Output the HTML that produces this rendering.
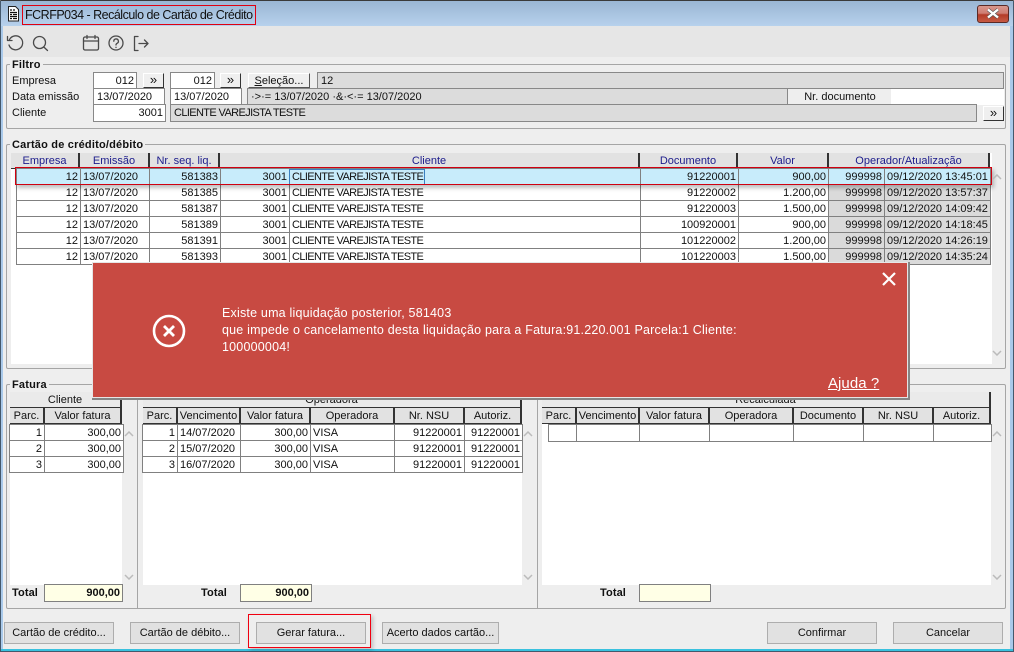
<!DOCTYPE html>
<html lang="pt"><head><meta charset="utf-8"><title>FCRFP034</title>
<style>
html,body{margin:0;padding:0;width:1014px;height:652px;overflow:hidden;background:#fff}
body{position:relative;font-family:"Liberation Sans",Arial,sans-serif;font-size:11px;letter-spacing:0;color:#111}
div,svg,span.a,table{position:absolute}
.t{white-space:nowrap;line-height:14px}
.b{font-weight:bold;letter-spacing:.1px}
.f{box-sizing:border-box;line-height:14px;white-space:nowrap;padding:0 2px 0 3px;overflow:hidden}
.w{background:#fff;border:1px solid #888}
.g{background:#dcdcdc;border:1px solid #888}
.r{text-align:right}
.btn{box-sizing:border-box;background:#e1e1e1;border:1px solid #adadad;text-align:center;line-height:21px;white-space:nowrap}
.sm{background:#efefef;border-top:1px solid #fff;border-left:1px solid #fff;border-right:1px solid #333;border-bottom:1px solid #333;box-sizing:border-box;text-align:center;line-height:11px;font-size:13px}
.grp{box-sizing:border-box;border:1px solid #a5a5a5;border-radius:2px}
.lab{background:#eee;padding:0 2px;font-weight:bold;line-height:14px;white-space:nowrap;letter-spacing:.2px}
table{border-collapse:collapse;table-layout:fixed;background:#fff}
td{border:1px solid #808080;padding:1px 2px 0;height:15px;line-height:14px;white-space:nowrap;overflow:hidden;text-align:right;box-sizing:border-box}
td.l{text-align:left}
td.gy{background:#dadada}
.c{font-size:11px;letter-spacing:-.62px}
tr.sel td{background:#c8ecfb}
.h{box-sizing:border-box;background:#e2e2e2;border-right:2px solid #333;border-bottom:1px solid #333;text-align:center;line-height:17px;white-space:nowrap;overflow:hidden}
.n{color:#1c1c8c}
.ch{width:10px;height:6px}
</style></head><body>
<!-- window frame -->
<div style="left:0;top:0;width:1014px;height:652px;background:#a9c9ea;border-radius:6px 6px 0 0"></div>
<div style="left:0;top:0;width:1014px;height:1px;background:#3a3a3a;border-radius:6px 6px 0 0"></div>
<div style="left:1px;top:1px;width:1012px;height:25px;background:linear-gradient(#9ab6d4,#b7d1ec)"></div>
<div style="left:0;top:1px;width:1px;height:651px;background:#44586c"></div>
<div style="left:1013px;top:1px;width:1px;height:651px;background:#44586c"></div>
<div style="left:3px;top:26px;width:1007px;height:623px;background:#eee"></div>
<div style="left:3px;top:26px;width:1007px;height:31px;background:#e6e6e6"></div>
<div style="left:1px;top:649px;width:1012px;height:2px;background:#39c1de"></div>
<div style="left:0;top:651px;width:1014px;height:1px;background:#44586c"></div>

<!-- title icon -->
<svg style="left:7px;top:6px" width="13" height="16" viewBox="0 0 13 16"><path d="M1.500.5h7l3 3v11.500h-10z" fill="#fff" stroke="#222"/><path d="M3 4h2M6 4h2M3 6.500h7M3 8.500h2M6 8.500h4M3 10.500h7M3 12.500h2M6 12.500h4" stroke="#111" stroke-width="1.200"/></svg>
<div class="t" style="left:25px;top:8px;font-size:12.500px;letter-spacing:-.5px;color:#111">FCRFP034 - Recálculo de Cartão de Crédito</div>
<div style="left:22px;top:5px;width:232px;height:18px;border:1px solid #e00010"></div>
<!-- close -->
<div style="left:977px;top:5px;width:30px;height:16px;border:1px solid #5a2a26;border-radius:3px;background:linear-gradient(#d8978d 0,#cf7d72 45%,#b43c28 55%,#c75a44 100%)"></div>
<svg style="left:985px;top:8px" width="16" height="11" viewBox="0 0 16 11"><path d="M3 1.500l10 8M13 1.500l-10 8" stroke="#555" stroke-width="3.600"/><path d="M3 1.500l10 8M13 1.500l-10 8" stroke="#fff" stroke-width="2.400"/></svg>

<!-- toolbar icons -->
<svg style="left:6px;top:34px" width="150" height="20" viewBox="0 0 150 20" fill="none" stroke="#4a4a4a" stroke-width="1.300" stroke-linecap="round" stroke-linejoin="round">
<path d="M3.500 5.500A7 7 0 1 1 3 11"/><path d="M1.500 2.500v4h4.500" />
<circle cx="33.500" cy="8.500" r="6"/><path d="M37.800 13l3.700 3.500"/>
<rect x="77.500" y="3" width="15" height="13" rx="1.500"/><path d="M77.500 7h15M81 1.500v3M89 1.500v3"/>
<circle cx="110" cy="9" r="7"/><path d="M107.800 7.200a2.300 2.300 0 1 1 3.300 2.100c-.8.400-1.100.9-1.100 1.700"/><path d="M110 13.300v.2"/>
<path d="M132 2.500h-3.500v14h3.500M133 9.500h8.500M138.500 6l3.500 3.500-3.500 3.500"/>
</svg>

<!-- Filtro -->
<div class="grp" style="left:6px;top:64px;width:1000px;height:65px"></div>
<div class="lab" style="left:10px;top:58px">Filtro</div>
<div class="t" style="left:12px;top:74px">Empresa</div>
<div class="t" style="left:12px;top:90px">Data emissão</div>
<div class="t" style="left:12px;top:106px">Cliente</div>
<div class="f w r" style="left:93px;top:72px;width:44px;height:17px;line-height:17px">012</div>
<div class="sm" style="left:143px;top:73px;width:21px;height:15px">»</div>
<div class="f w r" style="left:170px;top:72px;width:45px;height:17px;line-height:17px">012</div>
<div class="sm" style="left:220px;top:73px;width:21px;height:15px">»</div>
<div class="sm" style="left:248px;top:73px;width:62px;height:15px;font-size:11px;line-height:14px;border-color:#fff #555 #555 #fff"><u>S</u>eleção...</div>
<div class="f g" style="left:317px;top:72px;width:687px;height:17px;line-height:17px">12</div>
<div class="f w" style="left:93px;top:88px;width:72px;height:17px;line-height:17px">13/07/2020</div>
<div class="f w" style="left:170px;top:88px;width:72px;height:17px;line-height:17px">13/07/2020</div>
<div class="f g" style="left:247px;top:88px;width:541px;height:17px;line-height:17px">·&gt;·= 13/07/2020 ·&amp;·&lt;·= 13/07/2020</div>
<div class="f" style="left:787px;top:88px;width:105px;height:17px;line-height:17px;text-align:center;background:#eee;border:1px solid #888;border-bottom:0">Nr. documento</div>
<div style="left:891px;top:88px;width:113px;height:16px;background:#fff;border-top:1px solid #888"></div>
<div class="f w r" style="left:93px;top:104px;width:73px;height:18px;line-height:17px">3001</div>
<div class="f g" style="left:170px;top:104px;width:807px;height:18px;line-height:17px"><span class="c">CLIENTE VAREJISTA TESTE</span></div>
<div class="sm" style="left:983px;top:106px;width:21px;height:15px">»</div>

<!-- Cartao group -->
<div class="grp" style="left:6px;top:144px;width:1000px;height:225px"></div>
<div class="lab" style="left:10px;top:138px">Cartão de crédito/débito</div>
<div style="left:11px;top:153px;width:981px;height:211px;background:#fff"></div>
<div style="left:11px;top:153px;width:979px;height:15px;background:#e2e2e2"></div>
<div class="h n" style="left:11px;top:153px;width:69px;height:16px">Empresa</div>
<div class="h n" style="left:80px;top:153px;width:70px;height:16px">Emissão</div>
<div class="h n" style="left:150px;top:153px;width:70px;height:16px">Nr. seq. liq.</div>
<div class="h n" style="left:220px;top:153px;width:420px;height:16px">Cliente</div>
<div class="h n" style="left:640px;top:153px;width:98px;height:16px">Documento</div>
<div class="h n" style="left:738px;top:153px;width:91px;height:16px">Valor</div>
<div class="h n" style="left:829px;top:153px;width:161px;height:16px">Operador/Atualização</div>
<div style="left:16px;top:168px;width:975px;height:98px;overflow:hidden">
<table style="left:0;top:0;width:974px">
<colgroup><col style="width:64px"><col style="width:69px"><col style="width:71px"><col style="width:69px"><col style="width:351px"><col style="width:98px"><col style="width:90px"><col style="width:56px"><col style="width:106px"></colgroup>
<tr class="sel" style="height:16px"><td>12</td><td class="l">13/07/2020</td><td>581383</td><td>3001</td><td class="l"><span class="c">CLIENTE VAREJISTA TESTE</span></td><td>91220001</td><td>900,00</td><td>999998</td><td class="l">09/12/2020 13:45:01</td></tr>
<tr style="height:16px"><td>12</td><td class="l">13/07/2020</td><td>581385</td><td>3001</td><td class="l"><span class="c">CLIENTE VAREJISTA TESTE</span></td><td>91220002</td><td>1.200,00</td><td class="gy">999998</td><td class="l gy">09/12/2020 13:57:37</td></tr>
<tr style="height:16px"><td>12</td><td class="l">13/07/2020</td><td>581387</td><td>3001</td><td class="l"><span class="c">CLIENTE VAREJISTA TESTE</span></td><td>91220003</td><td>1.500,00</td><td class="gy">999998</td><td class="l gy">09/12/2020 14:09:42</td></tr>
<tr style="height:16px"><td>12</td><td class="l">13/07/2020</td><td>581389</td><td>3001</td><td class="l"><span class="c">CLIENTE VAREJISTA TESTE</span></td><td>100920001</td><td>900,00</td><td class="gy">999998</td><td class="l gy">09/12/2020 14:18:45</td></tr>
<tr style="height:16px"><td>12</td><td class="l">13/07/2020</td><td>581391</td><td>3001</td><td class="l"><span class="c">CLIENTE VAREJISTA TESTE</span></td><td>101220002</td><td>1.200,00</td><td class="gy">999998</td><td class="l gy">09/12/2020 14:26:19</td></tr>
<tr style="height:16px"><td>12</td><td class="l">13/07/2020</td><td>581393</td><td>3001</td><td class="l"><span class="c">CLIENTE VAREJISTA TESTE</span></td><td>101220003</td><td>1.500,00</td><td class="gy">999998</td><td class="l gy">09/12/2020 14:35:24</td></tr>
</table></div>
<div style="left:289px;top:169px;width:134px;height:14px;border:1px solid #3c80c0"></div>
<div style="left:15px;top:167px;width:975px;height:16px;border:1px solid #d00010;box-shadow:2px 3px 4px rgba(0,0,0,.25)"></div>
<svg class="ch" style="left:992px;top:174px" viewBox="0 0 10 6"><path d="M1 5l4-4 4 4" fill="none" stroke="#bbb" stroke-width="1.500"/></svg>
<svg class="ch" style="left:992px;top:350px" viewBox="0 0 10 6"><path d="M1 1l4 4 4-4" fill="none" stroke="#bbb" stroke-width="1.500"/></svg>

<!-- Fatura group -->
<div class="grp" style="left:6px;top:384px;width:1000px;height:225px"></div>
<div style="left:137px;top:385px;width:1px;height:223px;background:#a5a5a5"></div>
<div style="left:537px;top:385px;width:1px;height:223px;background:#a5a5a5"></div>
<div class="lab" style="left:10px;top:378px">Fatura</div>

<div style="left:10px;top:408px;width:112px;height:177px;background:#fff"></div>
<div class="h" style="left:10px;top:392px;width:112px;height:16px;background:#eaeaea">Cliente</div>
<div class="h" style="left:10px;top:408px;width:35px;height:16px">Parc.</div>
<div class="h" style="left:45px;top:408px;width:77px;height:16px">Valor fatura</div>
<table style="left:9px;top:424px;width:114px">
<colgroup><col style="width:35px"><col style="width:79px"></colgroup>
<tr style="height:16px"><td>1</td><td>300,00</td></tr><tr style="height:16px"><td>2</td><td>300,00</td></tr><tr style="height:16px"><td>3</td><td>300,00</td></tr></table>
<svg class="ch" style="left:124px;top:431px" viewBox="0 0 10 6"><path d="M1 5l4-4 4 4" fill="none" stroke="#bbb" stroke-width="1.500"/></svg>
<svg class="ch" style="left:124px;top:574px" viewBox="0 0 10 6"><path d="M1 1l4 4 4-4" fill="none" stroke="#bbb" stroke-width="1.500"/></svg>

<div style="left:143px;top:408px;width:379px;height:177px;background:#fff"></div>
<div class="h" style="left:143px;top:392px;width:379px;height:16px;background:#eaeaea">Operadora</div>
<div class="h" style="left:143px;top:408px;width:35px;height:16px">Parc.</div>
<div class="h" style="left:178px;top:408px;width:63px;height:16px">Vencimento</div>
<div class="h" style="left:241px;top:408px;width:70px;height:16px">Valor fatura</div>
<div class="h" style="left:311px;top:408px;width:84px;height:16px">Operadora</div>
<div class="h" style="left:395px;top:408px;width:70px;height:16px">Nr. NSU</div>
<div class="h" style="left:465px;top:408px;width:57px;height:16px">Autoriz.</div>
<table style="left:142px;top:424px;width:380px">
<colgroup><col style="width:35px"><col style="width:63px"><col style="width:70px"><col style="width:84px"><col style="width:70px"><col style="width:58px"></colgroup>
<tr style="height:16px"><td>1</td><td class="l">14/07/2020</td><td>300,00</td><td class="l">VISA</td><td>91220001</td><td>91220001</td></tr>
<tr style="height:16px"><td>2</td><td class="l">15/07/2020</td><td>300,00</td><td class="l">VISA</td><td>91220001</td><td>91220001</td></tr>
<tr style="height:16px"><td>3</td><td class="l">16/07/2020</td><td>300,00</td><td class="l">VISA</td><td>91220001</td><td>91220001</td></tr></table>
<svg class="ch" style="left:523px;top:431px" viewBox="0 0 10 6"><path d="M1 5l4-4 4 4" fill="none" stroke="#bbb" stroke-width="1.500"/></svg>
<svg class="ch" style="left:523px;top:574px" viewBox="0 0 10 6"><path d="M1 1l4 4 4-4" fill="none" stroke="#bbb" stroke-width="1.500"/></svg>

<div style="left:542px;top:408px;width:449px;height:177px;background:#fff"></div>
<div class="h" style="left:542px;top:392px;width:449px;height:16px;background:#eaeaea">Recalculada</div>
<div class="h" style="left:542px;top:408px;width:35px;height:16px">Parc.</div>
<div class="h" style="left:577px;top:408px;width:63px;height:16px">Vencimento</div>
<div class="h" style="left:640px;top:408px;width:70px;height:16px">Valor fatura</div>
<div class="h" style="left:710px;top:408px;width:84px;height:16px">Operadora</div>
<div class="h" style="left:794px;top:408px;width:70px;height:16px">Documento</div>
<div class="h" style="left:864px;top:408px;width:70px;height:16px">Nr. NSU</div>
<div class="h" style="left:934px;top:408px;width:57px;height:16px">Autoriz.</div>
<table style="left:548px;top:424px;width:443px">
<colgroup><col style="width:28px"><col style="width:63px"><col style="width:70px"><col style="width:84px"><col style="width:70px"><col style="width:70px"><col style="width:58px"></colgroup>
<tr style="height:17px"><td></td><td></td><td></td><td></td><td></td><td></td><td></td></tr></table>
<svg class="ch" style="left:992px;top:431px" viewBox="0 0 10 6"><path d="M1 5l4-4 4 4" fill="none" stroke="#bbb" stroke-width="1.500"/></svg>
<svg class="ch" style="left:992px;top:574px" viewBox="0 0 10 6"><path d="M1 1l4 4 4-4" fill="none" stroke="#bbb" stroke-width="1.500"/></svg>

<div class="t b" style="left:12px;top:586px">Total</div>
<div class="f r" style="left:44px;top:584px;width:79px;height:18px;line-height:17px;background:#ffffe6;border:1px solid #808080;font-weight:bold">900,00</div>
<div class="t b" style="left:201px;top:586px">Total</div>
<div class="f r" style="left:240px;top:584px;width:72px;height:18px;line-height:17px;background:#ffffe6;border:1px solid #808080;font-weight:bold">900,00</div>
<div class="t b" style="left:600px;top:586px">Total</div>
<div class="f" style="left:639px;top:584px;width:72px;height:18px;background:#ffffe6;border:1px solid #808080"></div>

<!-- buttons -->
<div class="btn" style="left:4px;top:622px;width:110px;height:22px">Cartão de crédito...</div>
<div class="btn" style="left:130px;top:622px;width:110px;height:22px">Cartão de débito...</div>
<div style="left:248px;top:614px;width:121px;height:32px;border:1px solid #f00010;box-shadow:2px 2px 4px rgba(0,0,0,.2)"></div>
<div class="btn" style="left:256px;top:622px;width:110px;height:22px">Gerar fatura...</div>
<div class="btn" style="left:382px;top:622px;width:117px;height:22px">Acerto dados cartão...</div>
<div class="btn" style="left:767px;top:622px;width:110px;height:22px">Confirmar</div>
<div class="btn" style="left:893px;top:622px;width:110px;height:22px">Cancelar</div>

<!-- modal -->
<div style="left:92px;top:262px;width:816px;height:136px;box-sizing:border-box;background:#c84a42;border:1px solid #e6e6e6;box-shadow:1px 1px 0 1px #858585"></div>
<svg style="left:881px;top:271px" width="16" height="16" viewBox="0 0 16 16"><path d="M2 2l12 12M14 2L2 14" stroke="#fff" stroke-width="2.200"/></svg>
<svg style="left:151px;top:313px" width="36" height="36" viewBox="0 0 36 36" fill="none" stroke="#fff"><circle cx="18" cy="18" r="15" stroke-width="2.600"/><path d="M13 13l10 10M23 13L13 23" stroke-width="2.800"/></svg>
<div class="t" style="left:222px;top:305px;font-size:12.500px;letter-spacing:.2px;line-height:17px;color:#fff;white-space:normal;width:560px">Existe uma liquidação posterior, 581403<br>que impede o cancelamento desta liquidação para a Fatura:91.220.001 Parcela:1 Cliente:<br>100000004!</div>
<div class="t" style="left:828px;top:375px;font-size:15px;letter-spacing:.05px;line-height:18px;color:#fff;text-decoration:underline">Ajuda ?</div>
</body></html>
